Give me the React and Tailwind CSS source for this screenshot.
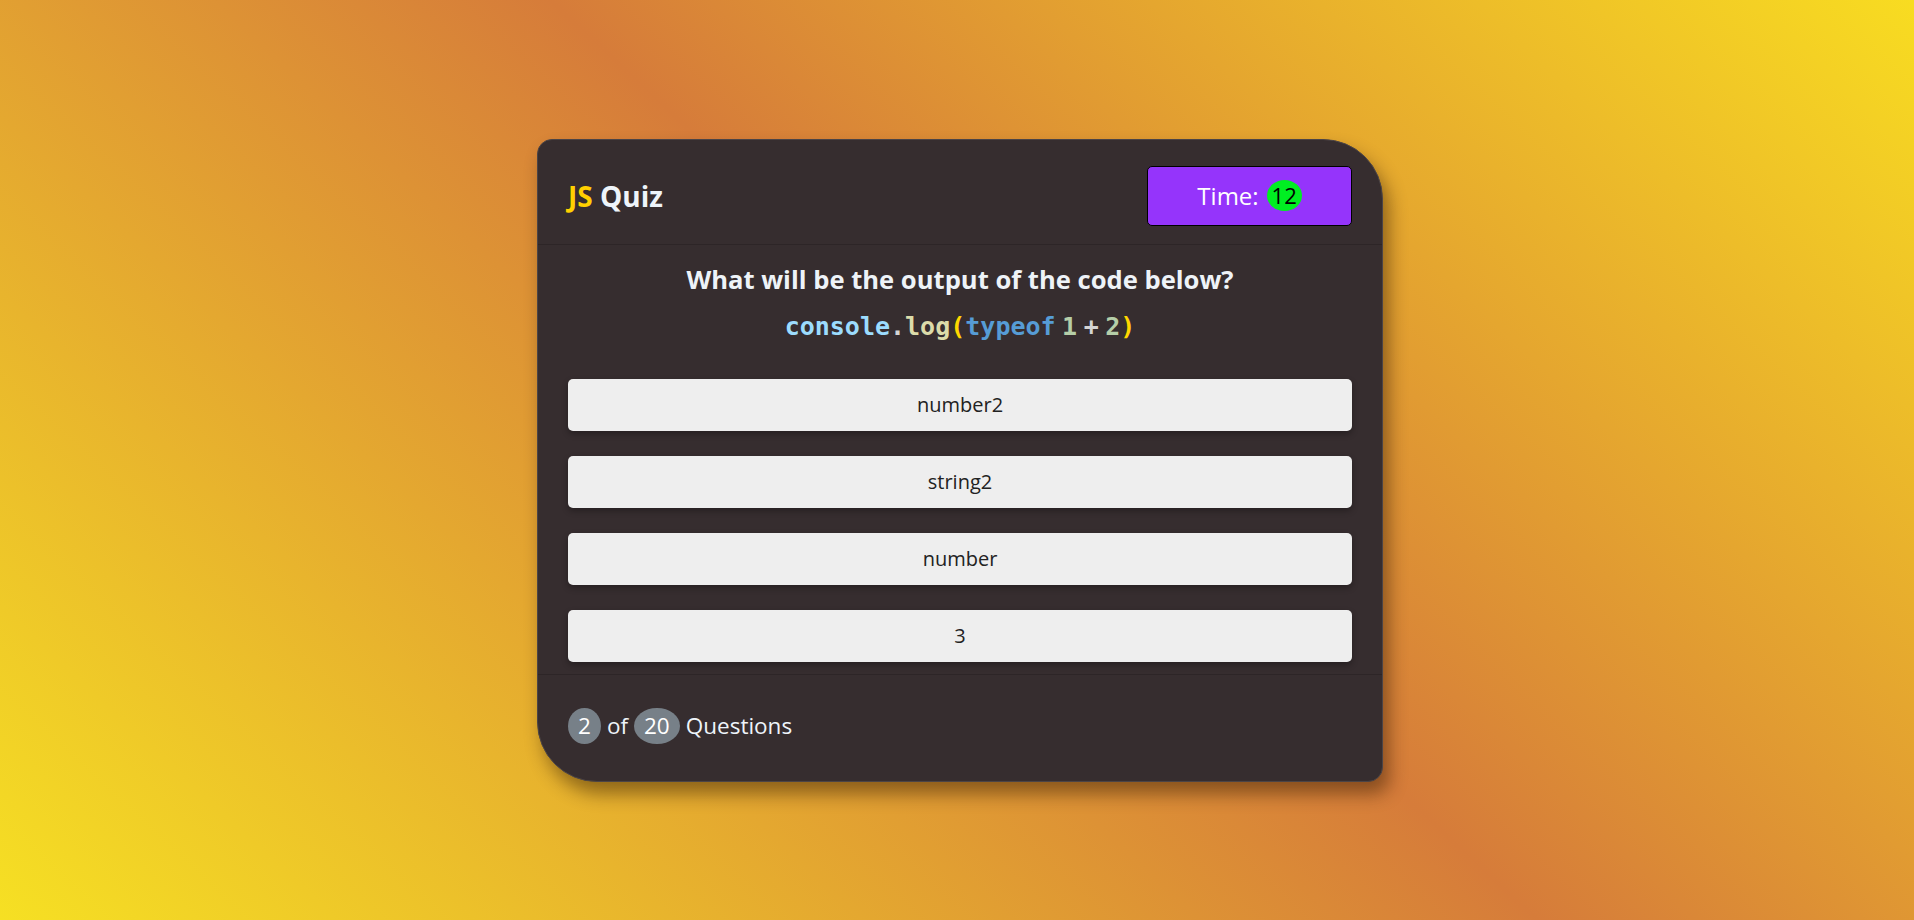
const OPTIONS = ['number2', 'string2', 'number', '3'];

function Badge({ children }) {
    return (
        <span className="inline-flex items-center justify-center h-[36px] px-[10px] rounded-[50%] bg-[#778088] text-white">
            {children}
        </span>
    );
}

export default function App() {
    return (
        <div className="min-h-screen w-full flex items-center justify-center bg-[linear-gradient(43deg,#f6e023_0%,#d67c3a_53%,#f8dc21_100%)] font-['Open_Sans',sans-serif]">
            <div className="ml-[6px] w-[846px] bg-[#362d2f] border border-[#4b4446] rounded-tl-[15px] rounded-tr-[60px] rounded-br-[15px] rounded-bl-[60px] shadow-[6px_12px_18px_rgba(40,20,0,0.45)]">
                {/* Header */}
                <div className="flex items-center justify-between px-[30px] pt-[26px] pb-[18px] border-b border-[#2d2527]">
                    <h1 className="text-[28px] font-bold">
                        <span className="text-[#ffd000]">JS</span> <span className="text-[#eef4fa]">Quiz</span>
                    </h1>
                    <div className="w-[205px] h-[60px] bg-[#9534fb] border border-black rounded-[5px] flex items-center justify-center gap-[8px] text-[24px] text-white">
                        <span>Time:</span>
                        <span className="inline-flex items-center justify-center w-[35px] h-[31px] rounded-[50%] bg-[#00ee22] text-black text-[22px]">12</span>
                    </div>
                </div>

                {/* Question */}
                <div className="px-[30px] pt-[17px] pb-[12px]">
                    <h2 className="text-center text-[25.6px] leading-[36px] font-bold text-[#eef3f8]">What will be the output of the code below?</h2>
                    <p className="mt-[10px] text-center text-[25px] leading-[35px] font-bold font-['DejaVu_Sans_Mono',monospace] whitespace-pre">
                        <span className="text-[#9cdcfe]">console</span>
                        <span className="text-[#d4d4d4]">.</span>
                        <span className="text-[#dcdcaa]">log</span>
                        <span className="text-[#ffd700]">(</span>
                        <span className="text-[#569cd6]">typeof</span>
                        <span className="font-['Open_Sans']"> </span>
                        <span className="text-[#b5cea8]">1</span>
                        <span className="font-['Open_Sans']"> </span>
                        <span className="text-[#d4d4d4]">+</span>
                        <span className="font-['Open_Sans']"> </span>
                        <span className="text-[#b5cea8]">2</span>
                        <span className="text-[#ffd700]">)</span>
                    </p>

                    <div className="mt-[35px] flex flex-col gap-[25px]">
                        {OPTIONS.map(opt => (
                            <button
                                key={opt}
                                className="h-[52px] w-full rounded-[5px] bg-[#eeeeee] text-[20px] text-[#222222] shadow-[0_3px_6px_rgba(0,0,0,0.3)]"
                            >
                                {opt}
                            </button>
                        ))}
                    </div>
                </div>

                {/* Footer */}
                <div className="border-t border-[#2d2527] px-[30px] h-[107px] pb-[4px] flex items-center gap-[6px] text-[22.5px] text-[#eef4fa]">
                    <Badge>2</Badge>
                    <span>of</span>
                    <Badge>20</Badge>
                    <span>Questions</span>
                </div>
            </div>
        </div>
    );
}
